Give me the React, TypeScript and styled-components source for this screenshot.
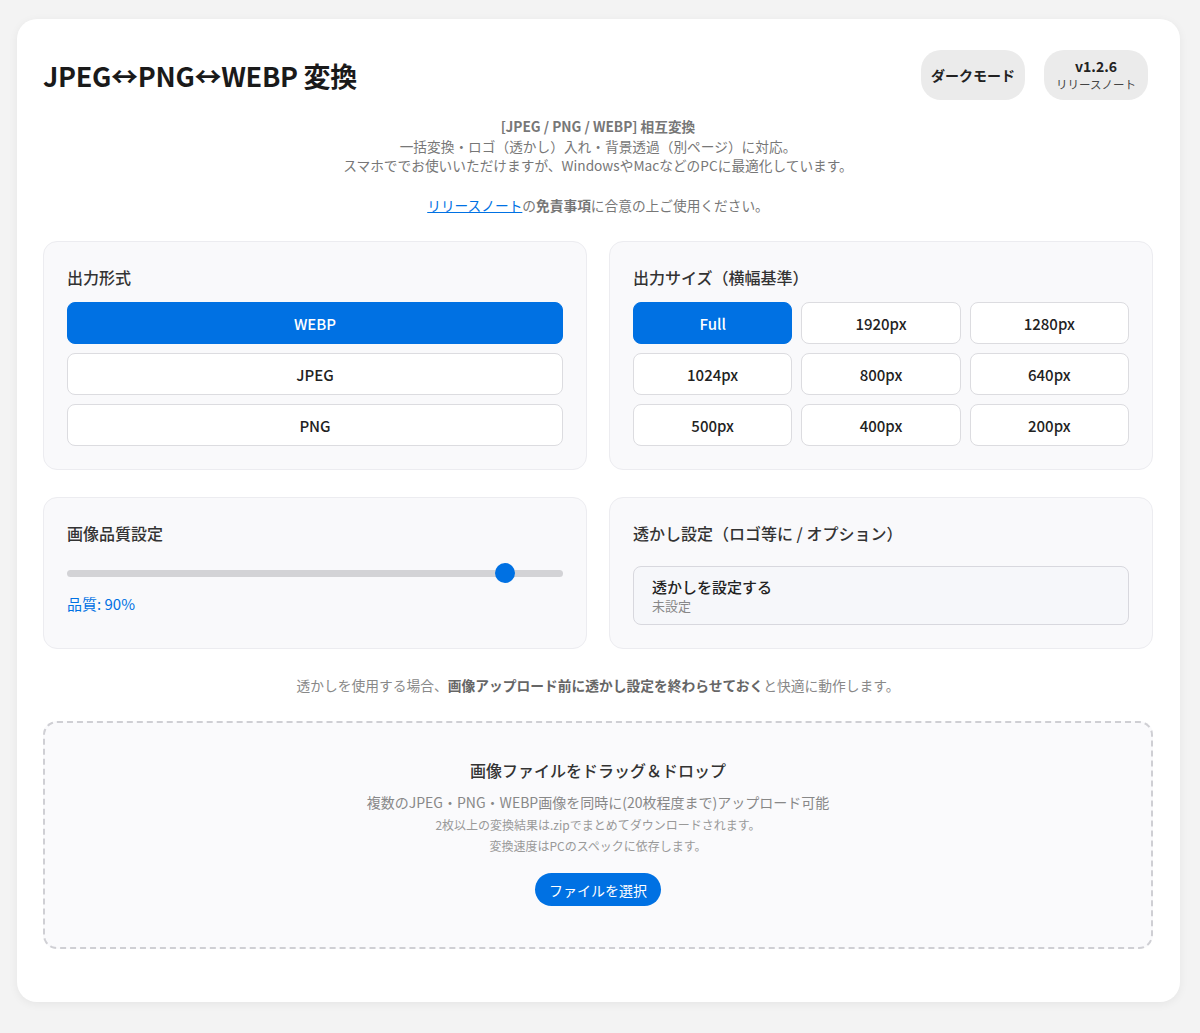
import React, { useState } from "react";
import styled, { createGlobalStyle } from "styled-components";

const BLUE = "#0071e3";
const FONT = `"Noto Sans CJK JP", "Noto Sans", sans-serif`;

const Global = createGlobalStyle`
	* { box-sizing: border-box; }
	html, body { margin: 0; padding: 0; }
	body {
		background: #f3f3f3;
		font-family: ${FONT};
		color: #222;
	}
`;

const formats = ["WEBP", "JPEG", "PNG"];
const sizes = ["Full", "1920px", "1280px", "1024px", "800px", "640px", "500px", "400px", "200px"];

export default function App() {
	const [format, setFormat] = useState("WEBP");
	const [size, setSize] = useState("Full");
	const [quality, setQuality] = useState(90);

	return (
		<Page>
			<Global />
			<Card>
				<Header>
					<Title>JPEG↔PNG↔WEBP 変換</Title>
					<HeaderButtons>
						<PillButton>ダークモード</PillButton>
						<PillButton>
							<Version>v1.2.6</Version>
							<VersionSub>リリースノート</VersionSub>
						</PillButton>
					</HeaderButtons>
				</Header>

				<Intro>
					<p>
						<strong>[JPEG / PNG / WEBP] 相互変換</strong>
						<br />
						一括変換・ロゴ（透かし）入れ・背景透過（別ページ）に対応。
						<br />
						スマホででお使いいただけますが、WindowsやMacなどのPCに最適化しています。
					</p>
					<Notice>
						<a href="#">リリースノート</a>の<strong>免責事項</strong>に合意の上ご使用ください。
					</Notice>
				</Intro>

				<Grid>
					<Panel>
						<PanelTitle>出力形式</PanelTitle>
						<ButtonStack>
							{formats.map(f => (
								<OptionButton key={f} $active={format === f} onClick={() => setFormat(f)}>
									{f}
								</OptionButton>
							))}
						</ButtonStack>
					</Panel>

					<Panel>
						<PanelTitle>出力サイズ（横幅基準）</PanelTitle>
						<SizeGrid>
							{sizes.map(s => (
								<OptionButton key={s} $active={size === s} onClick={() => setSize(s)}>
									{s}
								</OptionButton>
							))}
						</SizeGrid>
					</Panel>

					<Panel>
						<PanelTitle>画像品質設定</PanelTitle>
						<Slider
							type="range"
							min={0}
							max={100}
							value={quality}
							onChange={e => setQuality(Number(e.target.value))}
						/>
						<QualityLabel>品質: {quality}%</QualityLabel>
					</Panel>

					<Panel>
						<PanelTitle>透かし設定（ロゴ等に / オプション）</PanelTitle>
						<WatermarkBox>
							<WatermarkTitle>透かしを設定する</WatermarkTitle>
							<WatermarkState>未設定</WatermarkState>
						</WatermarkBox>
					</Panel>
				</Grid>

				<Hint>
					透かしを使用する場合、<strong>画像アップロード前に透かし設定を終わらせておく</strong>と快適に動作します。
				</Hint>

				<DropZone>
					<DropTitle>画像ファイルをドラッグ＆ドロップ</DropTitle>
					<DropText>複数のJPEG・PNG・WEBP画像を同時に(20枚程度まで)アップロード可能</DropText>
					<DropSmall>2枚以上の変換結果は.zipでまとめてダウンロードされます。</DropSmall>
					<DropSmall>変換速度はPCのスペックに依存します。</DropSmall>
					<SelectButton>ファイルを選択</SelectButton>
				</DropZone>
			</Card>
			<Footer>© 2025</Footer>
		</Page>
	);
}

const Page = styled.div`
	padding: 19px 20px 0 17px;
`;
const Card = styled.div`
	background: #fff;
	border-radius: 20px;
	box-shadow: 0 2px 10px rgba(0, 0, 0, 0.06);
	padding: 31px 27px 53px 26px;
`;
const Header = styled.div`
	display: flex;
	justify-content: space-between;
	align-items: center;
	height: 50px;
	padding-right: 5px;
`;
const Title = styled.h1`
	margin: 0;
	font-size: 27px;
	font-weight: 700;
	letter-spacing: -0.3px;
	color: #1a1a1a;
`;
const HeaderButtons = styled.div`
	display: flex;
	gap: 19px;
`;
const PillButton = styled.button`
	width: 104px;
	height: 50px;
	border: none;
	border-radius: 20px;
	background: #ebebeb;
	font-family: ${FONT};
	font-size: 14px;
	font-weight: 700;
	color: #222;
	display: flex;
	flex-direction: column;
	align-items: center;
	justify-content: center;
	cursor: pointer;
`;
const Version = styled.span`
	font-size: 14px;
	font-weight: 700;
	line-height: 18px;
`;
const VersionSub = styled.span`
	margin-top: 1px;
	font-size: 11.5px;
	font-weight: 400;
	line-height: 17px;
	color: #444;
`;
const Intro = styled.div`
	margin-top: 17px;
	text-align: center;
	font-size: 13.7px;
	line-height: 19.6px;
	color: #777;
	p { margin: 0; }
	strong { color: #777; font-weight: 700; }
	a { color: ${BLUE}; text-decoration: underline; }
`;
const Notice = styled.p`
	&& { margin-top: 20px; }
`;
const Grid = styled.div`
	display: grid;
	grid-template-columns: 1fr 1fr;
	gap: 27px 22px;
	margin-top: 26px;
`;
const Panel = styled.section`
	background: #f9f9fb;
	border: 1px solid #ececf0;
	border-radius: 14px;
	padding: 24px 23px 23px;
`;
const PanelTitle = styled.h2`
	margin: 0 0 14px;
	font-size: 16px;
	font-weight: 500;
	line-height: 22px;
	color: #333;
`;
const ButtonStack = styled.div`
	display: flex;
	flex-direction: column;
	gap: 9px;
`;
const SizeGrid = styled.div`
	display: grid;
	grid-template-columns: repeat(3, 1fr);
	gap: 9px;
`;
const OptionButton = styled.button<{ $active?: boolean }>`
	height: 42px;
	border-radius: 8px;
	border: 1px solid ${p => (p.$active ? BLUE : "#dcdce0")};
	background: ${p => (p.$active ? BLUE : "#fff")};
	color: ${p => (p.$active ? "#fff" : "#222")};
	font-family: ${FONT};
	font-size: 15px;
	font-weight: 500;
	cursor: pointer;
`;
const Slider = styled.input`
	-webkit-appearance: none;
	appearance: none;
	display: block;
	width: 100%;
	height: 20px;
	margin: 19px 0 0;
	background: transparent;
	&::-webkit-slider-runnable-track {
		height: 7px;
		border-radius: 4px;
		background: #d3d3d6;
	}
	&::-webkit-slider-thumb {
		-webkit-appearance: none;
		width: 20px;
		height: 20px;
		border-radius: 50%;
		background: ${BLUE};
		margin-top: -6.5px;
		border: none;
	}
	&::-moz-range-track {
		height: 7px;
		border-radius: 4px;
		background: #d3d3d6;
	}
	&::-moz-range-thumb {
		width: 20px;
		height: 20px;
		border-radius: 50%;
		background: ${BLUE};
		border: none;
	}
`;
const QualityLabel = styled.div`
	margin-top: 10px;
	font-size: 15px;
	line-height: 21px;
	font-weight: 400;
	color: ${BLUE};
`;
const WatermarkBox = styled.div`
	margin-top: 22px;
	background: #f6f7fa;
	border: 1px solid #d8d8de;
	border-radius: 8px;
	padding: 10px 18px 9px;
	cursor: pointer;
`;
const WatermarkTitle = styled.div`
	font-size: 15px;
	line-height: 20px;
	font-weight: 500;
	color: #222;
`;
const WatermarkState = styled.div`
	font-size: 13px;
	line-height: 18px;
	color: #888;
`;
const Hint = styled.p`
	margin: 26px 0 0;
	text-align: center;
	font-size: 13.75px;
	line-height: 20px;
	color: #888;
	strong { color: #666; font-weight: 700; }
`;
const DropZone = styled.div`
	margin-top: 26px;
	border: 2px dashed #cfcfd4;
	border-radius: 14px;
	background: #fafafc;
	padding: 36px 20px 41px;
	display: flex;
	flex-direction: column;
	align-items: center;
	text-align: center;
`;
const DropTitle = styled.h3`
	margin: 0;
	font-size: 16px;
	line-height: 22px;
	font-weight: 500;
	color: #333;
`;
const DropText = styled.p`
	margin: 11px 0 2px;
	font-size: 14px;
	line-height: 20px;
	color: #888;
`;
const DropSmall = styled.div`
	font-size: 12px;
	line-height: 21px;
	color: #999;
`;
const SelectButton = styled.button`
	margin-top: 17px;
	height: 33px;
	padding: 0 14px;
	border: none;
	border-radius: 17px;
	background: ${BLUE};
	color: #fff;
	font-family: ${FONT};
	font-size: 14px;
	cursor: pointer;
`;
const Footer = styled.div`
	text-align: center;
	margin-top: 26px;
	font-size: 12px;
	color: #ccc;
`;
